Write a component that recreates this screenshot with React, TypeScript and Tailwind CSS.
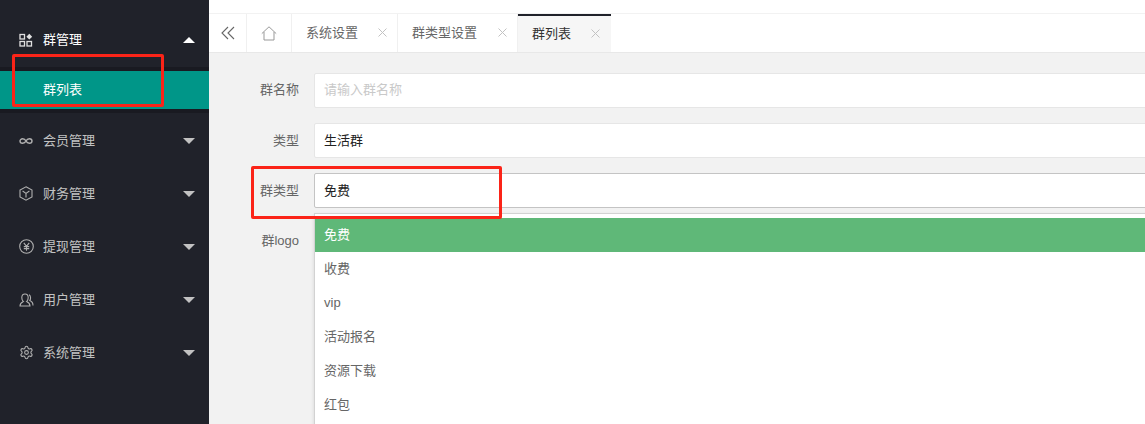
import React from 'react';
import { Settings } from 'lucide-react';

const IconGroup = () => (
  <svg width="14" height="14" viewBox="0 0 14 14" fill="none" stroke="currentColor" strokeWidth="1.3">
    <rect x="1" y="1.5" width="4.5" height="4.5" />
    <rect x="1" y="8.5" width="4.5" height="4.5" />
    <rect x="8" y="8.5" width="4.5" height="4.5" />
    <path d="M10.3 .8 L13.2 3.7 L10.3 6.6 L7.4 3.7 Z" fill="currentColor" stroke="none" />
  </svg>
);

const IconLink = () => (
  <svg width="14" height="14" viewBox="0 0 14 14" fill="none" stroke="currentColor" strokeWidth="1.4">
    <path d="M7 7 C6 5 4.8 4.8 3.6 4.8 C2.2 4.8 1 5.8 1 7 C1 8.2 2.2 9.2 3.6 9.2 C4.8 9.2 6 9 7 7 C8 5 9.2 4.8 10.4 4.8 C11.8 4.8 13 5.8 13 7 C13 8.2 11.8 9.2 10.4 9.2 C9.2 9.2 8 9 7 7 Z" />
  </svg>
);

const IconBox = () => (
  <svg width="14" height="15" viewBox="0 0 14 15" fill="none" stroke="currentColor" strokeWidth="1.1">
    <path d="M7 .8 L13 4 V11 L7 14.2 L1 11 V4 Z" />
    <path d="M3.6 5 L7 7.4 L10.4 5 M7 7.4 V11.6" />
  </svg>
);

const IconYen = () => (
  <svg width="15" height="15" viewBox="0 0 15 15" fill="none" stroke="currentColor" strokeWidth="1.1">
    <circle cx="7.5" cy="7.5" r="6.8" />
    <path d="M4.8 3.8 L7.5 7.4 L10.2 3.8 M7.5 7.4 V11.8 M4.8 7.6 H10.2 M4.8 9.6 H10.2" />
  </svg>
);

const IconUser = () => (
  <svg width="15" height="14" viewBox="0 0 15 14" fill="none" stroke="currentColor" strokeWidth="1.1">
    <path d="M1 13 C1 10.6 2.6 9.4 4.4 8.6 C3.2 7.6 2.8 6.4 2.8 4.8 C2.8 2.4 4 1 6 1 C8 1 9.2 2.4 9.2 4.8 C9.2 6.4 8.8 7.6 7.6 8.6 C9.4 9.4 11 10.6 11 13 Z" />
    <path d="M10 1.8 C11.6 2.6 12.2 5.6 10.8 7.6 C12.6 8.4 14 10 14 12.4" />
  </svg>
);

const IconClose = () => (
  <svg width="9" height="9" viewBox="0 0 9 9" fill="none" stroke="#c2c2c2" strokeWidth="1">
    <path d="M.5 .5 L8.5 8.5 M8.5 .5 L.5 8.5" />
  </svg>
);

const menus = [
  { name: '会员管理', icon: <IconLink /> },
  { name: '财务管理', icon: <IconBox /> },
  { name: '提现管理', icon: <IconYen /> },
  { name: '用户管理', icon: <IconUser /> },
  { name: '系统管理', icon: <Settings size={15} strokeWidth={1.7} /> },
];

const tabs = [
  { name: '系统设置', width: 'w-[106px]' },
  { name: '群类型设置', width: 'w-[120px]' },
];

const options = ['收费', 'vip', '活动报名', '资源下载', '红包'];

const Sidebar = () => (
  <div className="w-[209px] flex-none bg-[#20222a] pt-3">
    <div className="flex h-[55px] items-center pl-[19px] pr-[14px] text-white">
      <span className="flex w-6 flex-none text-[#e0e0e0]"><IconGroup /></span>
      <span className="flex-1">群管理</span>
      <span className="h-0 w-0 border-x-[6px] border-b-[6px] border-x-transparent border-b-white" />
    </div>
    <div className="bg-[#191a21] py-1">
      <div className="flex h-[38px] items-center bg-[#009688] pl-[43px] text-white">群列表</div>
    </div>
    <div className="pt-px">
      {menus.map((m) => (
        <div key={m.name} className="flex h-[53px] items-center pl-[19px] pr-[14px] text-[#c2c2c2]">
          <span className="flex w-6 flex-none text-[#b0b0b0]">{m.icon}</span>
          <span className="flex-1">{m.name}</span>
          <span className="h-0 w-0 border-x-[6px] border-t-[6px] border-x-transparent border-t-[#c2c2c2]" />
        </div>
      ))}
    </div>
  </div>
);

const TabBar = () => (
  <div className="flex h-[39px] flex-none border-b border-[#e8e8e8] bg-white text-[#666]">
    <div className="flex w-[38px] flex-none items-center justify-center border-r border-[#f0f0f0]">
      <svg width="14" height="14" viewBox="0 0 14 14" fill="none" stroke="#666" strokeWidth="1.1">
        <path d="M7 1 L1 7 L7 13 M13 1 L7 7 L13 13" />
      </svg>
    </div>
    <div className="flex w-[45px] flex-none items-center justify-center border-r border-[#f0f0f0]">
      <svg width="16" height="15" viewBox="0 0 16 15" fill="none" stroke="#999" strokeWidth="1">
        <path d="M.8 7.6 L8 .8 L15.2 7.6 M3 6 V14 H13 V6" />
      </svg>
    </div>
    {tabs.map((t) => (
      <div key={t.name} className={`flex flex-none items-center justify-between border-r border-[#f0f0f0] pb-px pl-[14px] pr-[10px] ${t.width}`}>
        <span>{t.name}</span>
        <IconClose />
      </div>
    ))}
    <div className="flex w-[93px] flex-none items-center justify-between border-t-2 border-[#20222a] bg-[#f6f6f6] pb-px pl-[14px] pr-[11px] text-[#333]">
      <span>群列表</span>
      <IconClose />
    </div>
  </div>
);

const Field = ({ label, children, focus, lift }: { label: string; children: React.ReactNode; focus?: boolean; lift?: boolean }) => (
  <div className="flex h-[35px] items-center">
    <label className={`w-[90px] flex-none pr-[15px] text-right text-[#666] ${lift ? 'pb-[2px]' : ''}`}>{label}</label>
    <div className={`flex h-full flex-1 items-center rounded-[2px] border bg-white pl-[9px] ${focus ? 'border-[#c4c4c4]' : 'border-[#e6e6e6]'} ${lift ? 'pb-[2px]' : ''}`}>
      {children}
    </div>
  </div>
);

const Form = () => (
  <div className="relative flex flex-1 flex-col bg-[#f2f2f2] pl-[15px] pt-5">
    <div className="-mr-2 flex flex-col gap-[15px]">
      <Field label="群名称" lift><span className="text-[#c9c9c9]">请输入群名称</span></Field>
      <Field label="类型"><span className="text-[#222]">生活群</span></Field>
      <Field label="群类型" focus><span className="text-[#222]">免费</span></Field>
      <Field label="群logo"><span /></Field>
    </div>
    {/* dropdown list hanging over the field below */}
    <div className="absolute -bottom-2 -right-2 left-[105px] top-[160px] overflow-hidden border border-[#d2d2d2] bg-white pt-1 shadow-[0_2px_4px_rgba(0,0,0,0.12)]">
      <div className="flex h-[34px] items-center bg-[#5fb878] pb-px pl-[9px] text-white">免费</div>
      {options.map((o) => (
        <div key={o} className="flex h-[34px] flex-none items-center pb-px pl-[9px] text-[#666]">{o}</div>
      ))}
    </div>
  </div>
);

const App: React.FC = () => {
  return (
    <div className="relative flex h-[424px] w-full overflow-hidden text-[13px] [font-family:'Liberation_Sans','Noto_Sans_CJK_SC',sans-serif]">
      <Sidebar />
      <div className="flex min-w-0 flex-1 flex-col overflow-hidden">
        <div className="h-[14px] flex-none border-b border-[#f2f2f2] bg-white" />
        <TabBar />
        <Form />
      </div>
      {/* annotation boxes drawn on top of the screenshot */}
      <div className="absolute left-[12px] top-[54px] h-[53px] w-[152px] rounded-[2px] border-[3px] border-[#fb2418]" />
      <div className="absolute left-[251px] top-[166px] h-[53px] w-[251px] rounded-[2px] border-[3px] border-[#fb2418]" />
    </div>
  );
};

export default App;
